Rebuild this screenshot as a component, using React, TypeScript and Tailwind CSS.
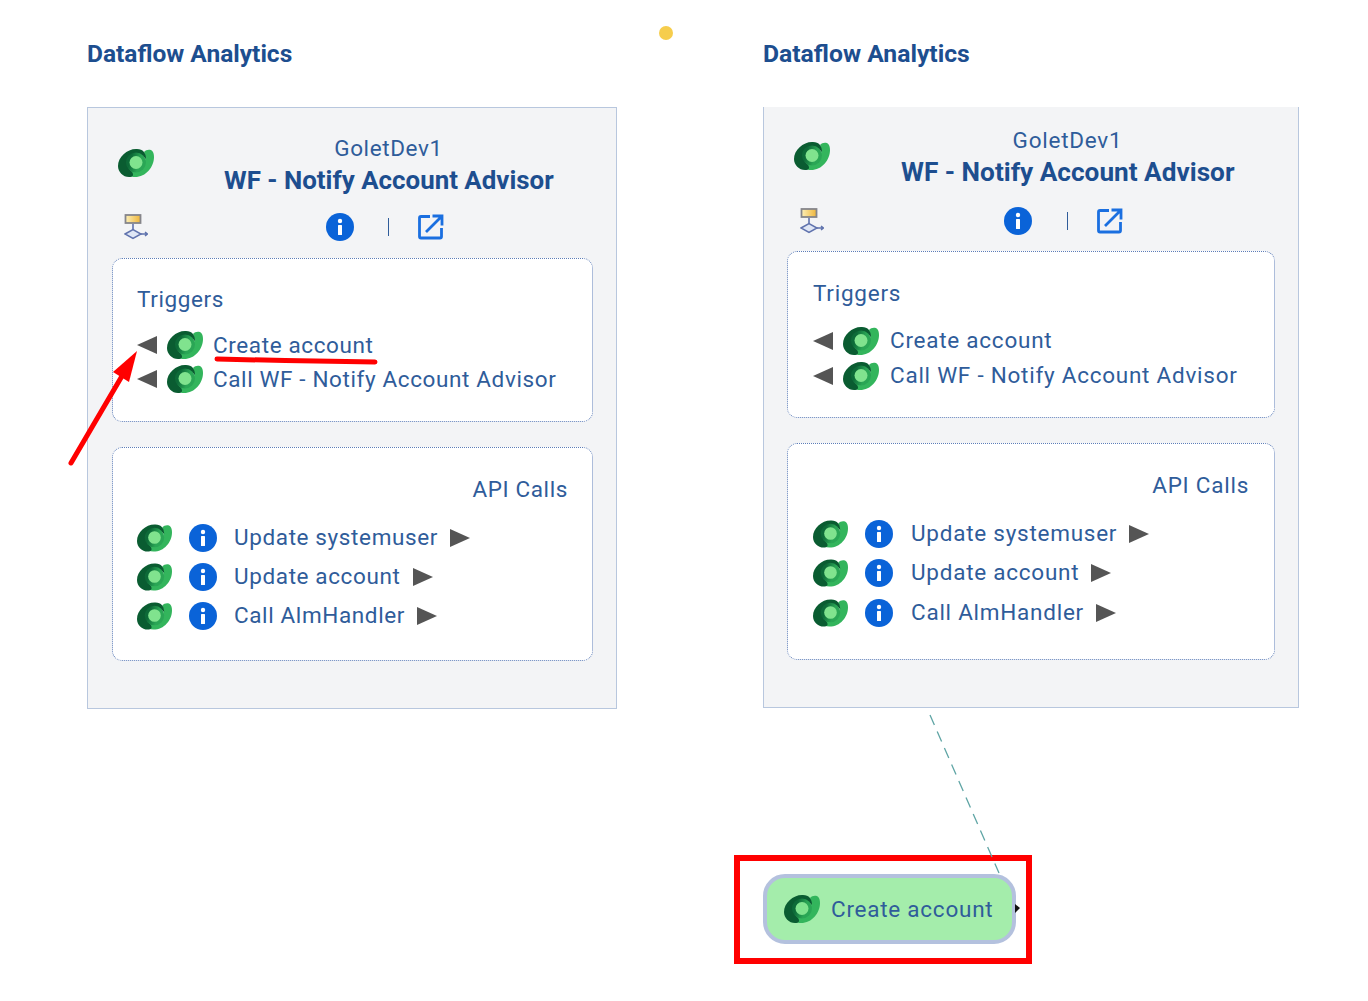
const TEXT_LEFT = "text-[22.500px] tracking-[0.62px] text-[#2f5c9a] whitespace-nowrap";
const TEXT_RIGHT = "text-[22.500px] tracking-[0.75px] text-[#2f5c9a] whitespace-nowrap";

function DataverseLogo({ className }: { className: string }) {
  return (
    <svg viewBox="0 0 36 28" className={className}>
      <defs>
        <linearGradient id="dvRing" x1="0" y1="0" x2="1" y2="0.3">
          <stop offset="0.3" stop-color="#0d6a38" />
          <stop offset="0.75" stop-color="#2aa655" />
        </linearGradient>
      </defs>
      <path d="M26 3C29 0 36-1 36 8c0 10-8 20-19 20-4 0-7-2-8-5l14-7c4-2 5-6 4-9-.3-1.500-.5-3-1-4z" fill="#33b55c" />
      <path d="M18 0C9 0 0 8 0 17c0 6 5 11 11 11 4 0 5-2 3-5-3-3-5-6-5-10 0-4 4-7 9-7 4 0 7 1 10 4 0-6-3-10-9-10z" fill="#0a5c31" />
      <circle cx="18" cy="13.500" r="10" fill="url(#dvRing)" />
      <circle cx="18" cy="13.500" r="6.500" fill="#80e38e" />
    </svg>
  );
}

function InfoIcon({ className }: { className: string }) {
  return (
    <svg viewBox="0 0 28 28" className={className}>
      <circle cx="14" cy="14" r="14" fill="#0a63d8" />
      <circle cx="14" cy="8" r="2.200" fill="#fff" />
      <rect x="12" y="12" width="4" height="10" rx="0.5" fill="#fff" />
    </svg>
  );
}

function ExternalIcon({ className }: { className: string }) {
  return (
    <svg viewBox="0 0 26 26" fill="none" stroke="#1a6fe0" strokeWidth="2.800" className={className}>
      <path d="M12 2.500H3a1.500 1.500 0 0 0-1.500 1.500v18.500A1.500 1.500 0 0 0 3 24h19a1.500 1.500 0 0 0 1.500-1.500V14" />
      <path d="M8 18 23 3M14.500 2H24v9.500" />
    </svg>
  );
}

function ProcessIcon({ className }: { className: string }) {
  return (
    <svg viewBox="0 0 24 26" className={className}>
      <defs>
        <linearGradient id="procFill" x1="0" y1="0" x2="1" y2="0">
          <stop offset="0" stop-color="#fdf0b8" />
          <stop offset="1" stop-color="#eeb53a" />
        </linearGradient>
      </defs>
      <rect x="1.500" y="1" width="15" height="8" fill="url(#procFill)" stroke="#85858a" strokeWidth="1.800" />
      <path d="M9 10v6" stroke="#5f72ad" strokeWidth="1.600" />
      <path d="M1 20 9 15.500l8 4.500-8 4.500z" fill="#dfe6f5" stroke="#5f72ad" strokeWidth="1.500" />
      <path d="M17 20h6M21 18l2.500 2-2.500 2" fill="none" stroke="#5f72ad" strokeWidth="1.500" />
    </svg>
  );
}

function Triangle({ left }: { left?: boolean }) {
  return (
    <svg viewBox="0 0 20 18" className="h-[18px] w-5 shrink-0">
      <path d={left ? "M0 9 20 0v18z" : "M20 9 0 0v18z"} fill="#555" />
    </svg>
  );
}

function TriggerRow({ label, right }: { label: string; right?: boolean }) {
  return (
    <div className={`flex items-center ${right ? "h-[35px]" : "h-[34px]"}`}>
      <Triangle left />
      <DataverseLogo className="ml-[10px] h-[28px] w-[36px] shrink-0" />
      <span className={right ? `ml-[11px] ${TEXT_RIGHT}` : `ml-[10px] mt-[2px] ${TEXT_LEFT}`}>{label}</span>
    </div>
  );
}

function ApiRow({ label, right }: { label: string; right?: boolean }) {
  return (
    <div className={`flex items-center ${right ? "h-[39.500px]" : "h-[39px]"}`}>
      <DataverseLogo className="h-[28px] w-[35px] shrink-0" />
      <InfoIcon className="ml-[17px] h-7 w-7 shrink-0" />
      <span className={right ? `ml-[18px] mr-3 ${TEXT_RIGHT}` : `ml-[17px] mr-3 ${TEXT_LEFT}`}>{label}</span>
      <Triangle />
    </div>
  );
}

function Card({ className, children }: { className: string; children: React.ReactNode }) {
  return (
    <div className={`rounded-[10px] border border-dotted border-[#5d7db8] bg-white ${className}`}>
      {children}
    </div>
  );
}

function Panel({ right }: { right?: boolean }) {
  const text = right ? TEXT_RIGHT : TEXT_LEFT;
  return (
    <div className={`border border-[#b8c7de] bg-[#f3f4f6] ${right ? "h-[601px] w-[536px] border-t-0 pt-[18px]" : "h-[602px] w-[530px] pt-[25px]"}`}>
      <div className="flex pl-[30px]">
        <DataverseLogo className={`h-[28px] w-[36px] shrink-0 ${right ? "mt-[17px]" : "mt-[16px]"}`} />
        <div className={`text-center ${right ? "ml-[71px] w-[333px]" : "ml-[70px] w-[329px]"}`}>
          <div className={`leading-[30px] ${text}`}>GoletDev1</div>
          <div className={`whitespace-nowrap font-bold leading-[34px] text-[#1d4e8f] ${right ? "text-[26.200px]" : "text-[25.900px]"}`}>WF - Notify Account Advisor</div>
        </div>
      </div>
      <div className={`flex h-[34px] items-center pl-[36px] ${right ? "mt-[15px]" : "mt-[13px]"}`}>
        <ProcessIcon className="h-[26px] w-6" />
        <InfoIcon className={`h-7 w-7 ${right ? "ml-[180px]" : "ml-[178px]"}`} />
        <div className={`h-[18px] w-px bg-[#2f5c9a] ${right ? "ml-[35px]" : "ml-[34px]"}`} />
        <ExternalIcon className="ml-[29px] h-[26px] w-[26px]" />
      </div>
      <div className={right ? "ml-6 mr-[23px] mt-[13px]" : "ml-6 mr-[23px] mt-[14px]"}>
        <Card className={right ? "-ml-px h-[167px] pl-[25px] pt-[26px]" : "h-[164px] pl-[24px] pt-[25px]"}>
          <div className={`leading-[30px] ${text}`}>Triggers</div>
          <div className={right ? "mt-[15px]" : "mt-[14px]"}>
            <TriggerRow right={right} label="Create account" />
            <TriggerRow right={right} label="Call WF - Notify Account Advisor" />
          </div>
        </Card>
        <Card className={right ? "-ml-px mt-[25px] h-[217px] px-[25px] pt-[26px]" : "mt-[25px] h-[214px] px-[24px] pt-[26px]"}>
          <div className={`text-right leading-[30px] ${text}`}>API Calls</div>
          <div className="mt-[14px]">
            <ApiRow right={right} label="Update systemuser" />
            <ApiRow right={right} label="Update account" />
            <ApiRow right={right} label="Call AlmHandler" />
          </div>
        </Card>
      </div>
    </div>
  );
}

export default function App() {
  return (
    <div className="relative flex h-[1001px] w-[1368px] bg-white pl-[87px] pt-[38px] font-['Roboto',sans-serif]">
      <div className="w-[530px]">
        <h1 className="h-[69px] text-[24.500px] font-bold leading-[32px] text-[#1d4e8f]">Dataflow Analytics</h1>
        <Panel />
      </div>
      <div className="ml-[146px] w-[536px]">
        <h1 className="h-[69px] text-[24.700px] font-bold leading-[32px] text-[#1d4e8f]">Dataflow Analytics</h1>
        <Panel right />
        <div className="ml-[-29px] mt-[147px] h-[109px] w-[298px] border-[6px] border-[#ff0000] pl-[23px] pt-[13px]">
          <div className="flex h-[70px] w-[253px] items-center rounded-[22px] border-[4px] border-[#b4c1de] bg-[#a4edab] pl-[17px]">
            <DataverseLogo className="h-[28px] w-[36px] shrink-0" />
            <span className={`ml-[11px] mt-[2px] ${TEXT_RIGHT}`}>Create account</span>
          </div>
        </div>
      </div>

      {/* yellow dot */}
      <div className="absolute left-[659px] top-[26px] h-[14px] w-[14px] rounded-full bg-[#f6cd4c]" />

      {/* annotations */}
      <svg className="pointer-events-none absolute left-0 top-0 h-[1001px] w-[1368px]" viewBox="0 0 1368 1001" fill="none">
        <path d="M217 359Q300 361 375 362" stroke="#ff0000" strokeWidth="5" strokeLinecap="round" />
        <path d="M71 463 122 376" stroke="#ff0000" strokeWidth="5" strokeLinecap="round" />
        <path d="M137 351 113 372 129 382z" fill="#ff0000" />
        <path d="M930 715 999 873" stroke="#5fa5a5" strokeWidth="1.300" strokeDasharray="11 7" />
        <path d="M1015 904l5 4-5 5z" fill="#111" />
      </svg>
    </div>
  );
}
